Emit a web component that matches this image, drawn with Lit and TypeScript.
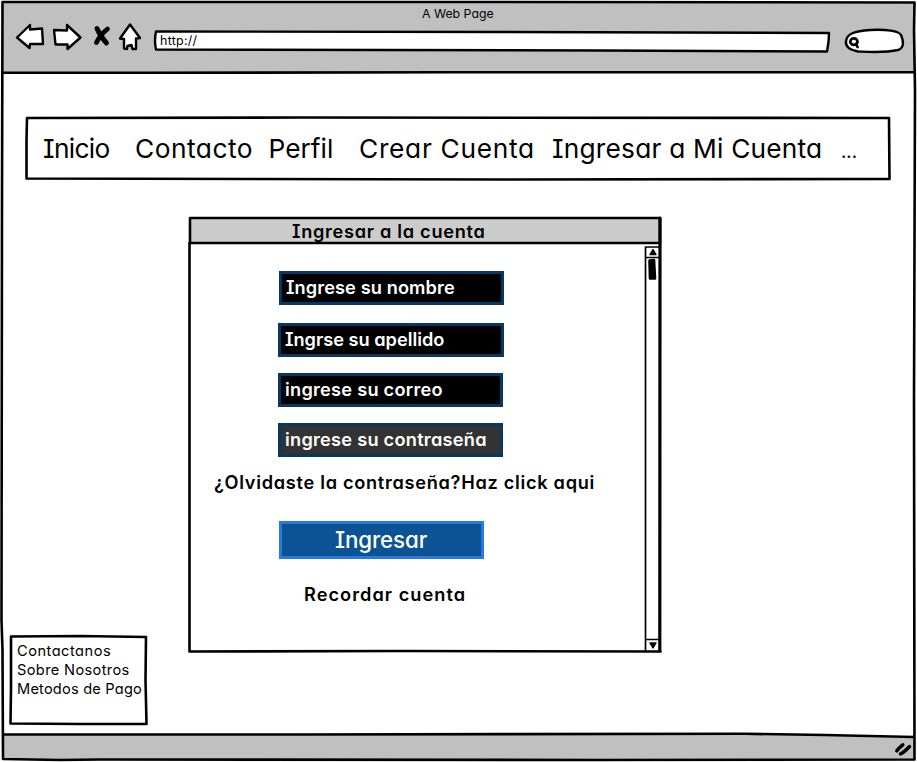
import { LitElement, html, css } from "lit";
import { customElement } from "lit/decorators.js";

const NAV = [
  { cls: "n1", text: "Inicio" },
  { cls: "n2", text: "Contacto" },
  { cls: "n3", text: "Perfil" },
  { cls: "n4", text: "Crear Cuenta" },
  { cls: "n5", text: "Ingresar a Mi Cuenta" },
  { cls: "n6", text: "..." },
];

const FIELDS = [
  { cls: "f1", text: "Ingrese su nombre" },
  { cls: "f2", text: "Ingrse su apellido" },
  { cls: "f3", text: "ingrese su correo" },
  { cls: "f4", text: "ingrese su contraseña" },
];

@customElement("app-root")
export class AppRoot extends LitElement {
  static styles = css`
    :host {
      display: block;
      position: relative;
      width: 917px;
      height: 762px;
      overflow: hidden;
      background: #fff;
      color: #000;
      font-family: Inter, "Open Sans", sans-serif;
      font-feature-settings: "cv11", "cv08", "kern";
    }
    * { box-sizing: border-box; }
    svg { display: block; overflow: visible; }
    .ink { position: absolute; inset: 0; width: 100%; height: 100%; fill: none; stroke: #000; stroke-width: 2.6; stroke-linejoin: round; stroke-linecap: round; }
    .page { position: relative; display: flex; flex-direction: column; height: 762px; }
    .t { white-space: pre; display: inline-block; }
    .title { height: 23px; padding: 4px 0 0 422px; line-height: 19px; font-size: 12.3px; }
    .tools { display: flex; height: 51px; padding-left: 15px; }
    .tools svg { flex: none; fill: #fff; stroke: #000; stroke-width: 2.4; stroke-linejoin: round; stroke-linecap: round; }
    .back { width: 38px; }
    .fwd { width: 40px; }
    .stop { width: 26px; }
    .home { width: 34px; }
    .url { position: relative; width: 691px; height: 51px; padding: 8px 0 0 7px; font-size: 12.5px; line-height: 20px; letter-spacing: 0.25px; }
    .url .t, .nav .t { position: relative; }
    .nav { position: relative; display: flex; margin: 42px 0 0 25px; width: 866px; height: 65px; padding-left: 18px; font-size: 26.3px; line-height: 65px; }
    .nav .t { line-height: 62px; }
    .n1 { width: 92px; letter-spacing: -0.7px; }
    .n2 { width: 133.5px; letter-spacing: 0.5px; }
    .n3 { width: 90.5px; }
    .n4 { width: 193px; letter-spacing: 0.7px; }
    .n5 { width: 289px; letter-spacing: 0.2px; }
    .n6 .t { font-size: 18.5px; }
    .box { position: relative; margin: 35px 0 0 188px; width: 474px; height: 437px; font-size: 18.2px; font-weight: 600; }
    .bar { position: relative; height: 26px; padding: 2px 0 0 104px; line-height: 26px; letter-spacing: 0.7px; }
    .form { position: relative; padding: 29px 0 0 90px; display: flex; flex-direction: column; }
    .field { height: 34px; width: 225px; background: #000; border: 3px solid #073763; padding-left: 4px; line-height: 27px; color: #fff; font-size: 18.2px; font-weight: 600; }
    .f1 { margin: 0 0 18px 1px; letter-spacing: 0.1px; }
    .f2 { width: 226px; margin-bottom: 16px; letter-spacing: 0; }
    .f3 { margin-bottom: 16px; letter-spacing: 0.25px; }
    .f4 { background: #333; letter-spacing: 0.25px; }
    .forgot { margin: 12px 0 0 -64px; line-height: 26px; letter-spacing: 0.7px; }
    .btn { margin: 26px 0 0 1px; width: 205px; height: 38px; background: #0b5394; border: 3px solid #2a78e4; color: #fff; font-size: 22.3px; font-weight: 500; line-height: 31px; padding-left: 53px; letter-spacing: -0.1px; }
    .remember { margin: 22px 0 0 26px; line-height: 26px; letter-spacing: 1.04px; }
    .links { position: absolute; left: 9px; top: 634px; width: 139px; height: 91px; padding: 8px 0 0 8px; font-size: 14.6px; line-height: 19px; }
    .links div { position: relative; white-space: pre; }
    .k1 { letter-spacing: 0.5px; }
    .k2 { letter-spacing: 0.36px; }
    .k3 { letter-spacing: 0.2px; }
  `;

  render() {
    return html`
      <svg class="ink" viewBox="0 0 917 762">
        <path d="M3 2H914V72H3ZM3 735L300 734.5L745 734L825 734.5L914 737V759H3Z" fill="#c0c0c0" stroke="none" />
        <path d="M2.5 2L500 2L914.5 2.5L914 30L915 90L914 400L914.5 759.5L600 760L100 759.5L60 760L3 759L2.5 650L1.5 620L2 200ZM3 72.5L150 72.8L450 72.2L914 72.2M3 734.5L300 734.5L745 733.8L825 735L914 737" />
        <path d="M896.8 750.8Q898.500 748 902.800 744.800M900.500 753.800Q904 752.500 909.5 746.5" stroke-width="3.5" />
      </svg>
      <div class="page">
        <div class="title"><span class="t">A Web Page</span></div>
        <div class="tools">
          <svg class="back" height="30" viewBox="15 23 38 30"><path d="M17 37.5L30 25V29.5L42 28.5L43 44L30 44L29.5 48Z" /></svg>
          <svg class="fwd" height="30" viewBox="53 23 40 30"><path d="M54 30L67 30.5V25L80.5 37.5L67.5 49V44.5L55.5 44.5Z" /></svg>
          <svg class="stop" height="30" viewBox="93 23 26 30"><path d="M97 28.5Q100 36 106.5 43M107.5 29Q100 35 96.500 42.500" stroke-width="4.8" /></svg>
          <svg class="home" height="30" viewBox="119 23 34 30"><path d="M130 24.5L140 38L136 38.5V49L132.5 49L131.5 45L127.5 46L127 49L124 48.5V39L120 38.5Z" /></svg>
          <div class="url">
            <svg class="ink" viewBox="153 23 691 51"><path d="M156 31.5L500 32L829 33L828.5 42L827 51.5L600 50.5L156 49.5Q154 41 156 31.5Z" /></svg>
            <span class="t">http://</span>
          </div>
          <svg width="62" height="30" viewBox="844 23 62 30">
            <path d="M846 41C847 34 854 31 870 30C886 29 899 31 901 35C904 42 904 48 898 50C885 53 871 52 858 51.5C850 50 845 47 846 41Z" />
            <path d="M856 43.800L857.500 47M853.800 38.300A3.600 3.300 0 1 0 853.900 38.300Z" stroke-width="2.700" />
          </svg>
        </div>
        <nav class="nav">
          <svg class="ink" viewBox="25 116 866 65"><path d="M27 118L300 117.5L889 118L889.5 179L500 179.5L250 179L26.5 178.5L26.5 140Z" /></svg>
          ${NAV.map((n) => html`<div class=${n.cls}><span class="t">${n.text}</span></div>`)}
        </nav>
        <section class="box">
          <svg class="ink" viewBox="188 216 474 437">
            <path d="M190 218H660V243H190Z" fill="#ccc" />
            <path d="M189.5 243L189.5 500L189.5 651.5L400 651L660.5 651.5" />
            <path d="M660 218L659.8 651" stroke-width="3.2" />
            <path d="M645.5 247L645.5 651M645.5 247H659M645.5 257.5H659M645.5 639.5H659" stroke-width="1.7" />
            <path d="M653 249.5L656 254.5H650ZM650 643L656 643L653 648Z" fill="#000" stroke-width="1.4" />
            <path d="M649.5 260.5L654 260L655 278.5L650 278.5Z" fill="#000" stroke-width="2.6" />
          </svg>
          <div class="bar"><span class="t">Ingresar a la cuenta</span></div>
          <div class="form">
            ${FIELDS.map((f) => html`<div class="field ${f.cls}"><span class="t">${f.text}</span></div>`)}
            <div class="forgot"><span class="t">¿Olvidaste la contraseña?Haz click aqui</span></div>
            <div class="btn"><span class="t">Ingresar</span></div>
            <div class="remember"><span class="t">Recordar cuenta</span></div>
          </div>
        </section>
        <aside class="links">
          <svg class="ink" viewBox="9 634 139 91"><path d="M11 636.5L80 636L146 637L145.5 680L146.5 724L80 724L10.5 723.5L11 690Z" fill="#fff" /></svg>
          <div class="k1">Contactanos</div>
          <div class="k2">Sobre Nosotros</div>
          <div class="k3">Metodos de Pago</div>
        </aside>
      </div>
    `;
  }
}
